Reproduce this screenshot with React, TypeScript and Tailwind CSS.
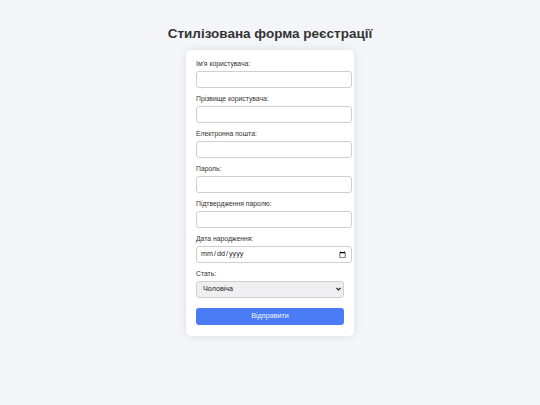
import React from "react";

const fields = [
  { label: "Ім'я користувача:", type: "text" },
  { label: "Прізвище користувача:", type: "text" },
  { label: "Електронна пошта:", type: "email" },
  { label: "Пароль:", type: "password" },
  { label: "Підтвердження паролю:", type: "password" },
  { label: "Дата народження:", type: "date" },
];

export default function App() {
  return (
    <div
      className="min-h-screen w-full bg-[#f4f5f9] flex flex-col items-center"
      style={{ fontFamily: '"Liberation Sans", Arial, sans-serif' }}
    >
      <h2 className="mt-[26px] mb-[8px] text-[13.5px] leading-[16px] font-bold text-[#333]">
        Стилізована форма реєстрації
      </h2>
      <form className="w-[168px] bg-white rounded-[5px] shadow-[0_0_8px_rgba(0,0,0,0.1)] pt-[9px] pb-[11px] px-[10px]">
        {fields.map((f) => (
          <div key={f.label} className="mb-[6px]">
            <label className="block text-[6.8px] leading-[10px] text-[#333] mb-[2px]">
              {f.label}
            </label>
            <input
              type={f.type}
              className="block w-[156px] h-[17px] border border-[#cfcfcf] rounded-[3px] bg-white px-[3px] text-[7.2px] text-[#222]"
            />
          </div>
        ))}
        <div>
          <label className="block text-[6.8px] leading-[10px] text-[#333] mb-[2px]">
            Стать:
          </label>
          <div className="relative w-[148px] h-[17px]">
            <select className="block w-full h-full appearance-none border border-[#cfcfcf] rounded-[3px] bg-[#efeff1] px-[6px] text-[7.2px] text-[#222]">
              <option>Чоловіча</option>
              <option>Жіноча</option>
            </select>
            <svg
              className="absolute right-[3px] top-[6px] pointer-events-none"
              width="5"
              height="4"
              viewBox="0 0 10 8"
            >
              <path d="M1 2 L5 6 L9 2" stroke="#222" strokeWidth="2.2" fill="none" />
            </svg>
          </div>
        </div>
        <button
          type="button"
          className="mt-[10px] block w-[148px] h-[17px] rounded-[3px] bg-[#4c7cf5] text-[#f0f4ff] text-[7.2px]"
        >
          Відправити
        </button>
      </form>
    </div>
  );
}
